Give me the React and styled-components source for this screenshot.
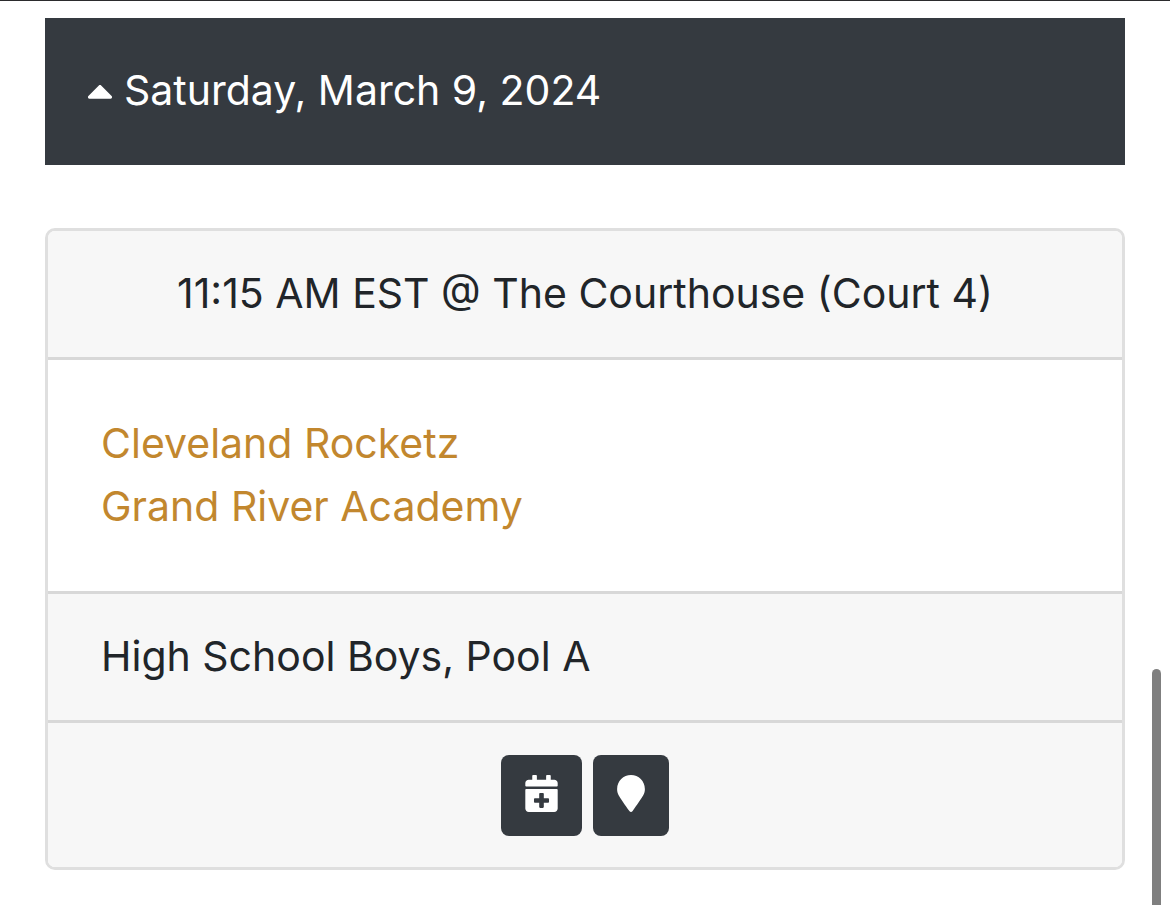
import React, { useState } from 'react';
import styled, { createGlobalStyle } from 'styled-components';
import { FaCalendarPlus, FaCaretUp, FaMapMarker } from 'react-icons/fa';

const game = {
  date: 'Saturday, March 9, 2024',
  time: '11:15 AM EST',
  place: 'The Courthouse (Court 4)',
  teams: ['Cleveland Rocketz', 'Grand River Academy'],
  division: 'High School Boys, Pool A',
};

function App() {
  const [isOpen, setIsOpen] = useState(true);

  return (
    <>
      <GlobalStyle />
      <Page>
        <DateBar aria-expanded={isOpen} onClick={() => setIsOpen(!isOpen)}>
          <Caret $open={isOpen} />
          {game.date}
        </DateBar>
        {isOpen && (
          <Card>
            <CardHeader>
              {game.time} @ {game.place}
            </CardHeader>
            <CardBody>
              {game.teams.map(team => (
                <TeamLink key={team} href="#">
                  {team}
                </TeamLink>
              ))}
            </CardBody>
            <CardFooter>{game.division}</CardFooter>
            <CardActions>
              <IconButton aria-label="Add to calendar" $iconWidth={33}>
                <FaCalendarPlus />
              </IconButton>
              <IconButton aria-label="Show on map" $iconWidth={28}>
                <FaMapMarker />
              </IconButton>
            </CardActions>
          </Card>
        )}
      </Page>
      <ScrollThumb />
    </>
  );
}

export default App;

const GlobalStyle = createGlobalStyle`
  * {
    box-sizing: border-box;
  }

  body {
    margin: 0;
    background-color: #fff;
    color: #212529;
    font-family: Inter, 'Liberation Sans', sans-serif;
    font-size: 41px;
    line-height: 63px;
  }
`;

const Page = styled.div`
  padding: 17px 45px 32px;
  border-top: 1px solid #2b2b2d;
`;

const DateBar = styled.button`
  display: flex;
  align-items: center;
  gap: 11px;
  width: 100%;
  padding: 41px 42px 43px;
  border: none;
  background-color: #353a40;
  color: #fff;
  font: inherit;
  text-align: left;
  cursor: pointer;
`;

const Caret = styled(FaCaretUp)`
  width: 26px;
  height: 42px;
  transform: ${({ $open }) => ($open ? 'none' : 'rotate(180deg)')};
`;

const Card = styled.section`
  margin-top: 63px;
  border: 3px solid #dfdfdf;
  border-radius: 10px;
  overflow: hidden;
`;

const CardHeader = styled.header`
  padding: 31px 53px 32px;
  border-bottom: 3px solid #d8d8d8;
  background-color: #f7f7f7;
  text-align: center;
`;

const CardBody = styled.div`
  display: flex;
  flex-direction: column;
  align-items: flex-start;
  padding: 52px 53px 53px;
`;

const TeamLink = styled.a`
  color: #c2872e;
  text-decoration: none;

  &:hover {
    text-decoration: underline;
  }
`;

const CardFooter = styled.footer`
  padding: 31px 53px 32px;
  border-top: 3px solid #d8d8d8;
  background-color: #f7f7f7;
`;

const CardActions = styled(CardFooter)`
  display: flex;
  justify-content: center;
  gap: 11px;
  padding: 32px 53px 31px;
`;

const IconButton = styled.button`
  display: flex;
  padding: 20px 24px 24px;
  border: none;
  border-radius: 8px;
  background-color: #353a40;
  color: #fff;
  cursor: pointer;

  svg {
    width: ${({ $iconWidth }) => $iconWidth}px;
    height: 37px;
  }
`;

const ScrollThumb = styled.div`
  position: fixed;
  top: 669px;
  right: 9px;
  bottom: 0;
  width: 9px;
  border-radius: 5px 5px 0 0;
  background-color: #7f7f7f;
`;
